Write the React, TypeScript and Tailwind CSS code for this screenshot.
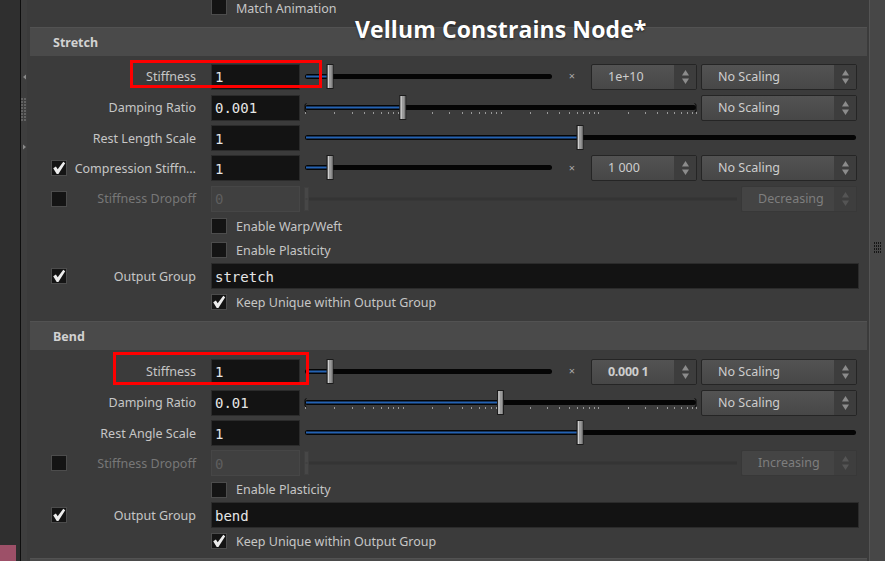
import React from "react";

const MONO = "font-['DejaVu_Sans_Mono',monospace]";

function Check({ checked, dim }: { checked?: boolean; dim?: boolean }) {
  return (
    <div className={`w-[16px] h-[16px] border ${dim ? "border-[#464646] bg-[#1a1a1a]" : "border-[#4c4c4c] bg-[#141414]"} flex items-center justify-center`}>
      {checked && (
        <svg width="14" height="14" viewBox="0 0 14 14">
          <path d="M1.2 7.2 L3.9 5.4 L5.7 8.3 L11.3 0.8 L13.2 2.3 L6.4 13 L4.7 13 Z" fill="#ececec" />
        </svg>
      )}
    </div>
  );
}

function Field({ value, w = "w-[89px]", disabled }: { value: string; w?: string; disabled?: boolean }) {
  return (
    <div
      className={`${w} h-[26px] shrink-0 border flex items-center pl-[3px] pt-[2px] ${MONO} text-[14px] ${
        disabled ? "bg-[#404040] border-[#464646] text-[#5e5e5e]" : "bg-[#131313] border-[#2b2b2b] text-[#e6e6e6]"
      }`}
    >
      {value}
    </div>
  );
}

function Arrows({ dim }: { dim?: boolean }) {
  const c = dim ? "#555555" : "#8c8c8c";
  return (
    <div className={`w-[22px] h-full flex items-center justify-center ${dim ? "bg-[#3e3e3e]" : "bg-[#3d3d3d]"}`}>
      <svg width="9" height="18" viewBox="0 0 9 18">
        <path d="M4.5 2 L8 7.5 L1 7.5 Z" fill={c} />
        <path d="M4.5 16 L8 10.5 L1 10.5 Z" fill={c} />
      </svg>
    </div>
  );
}

function Menu({ text, w, bold, dim }: { text: string; w: string; bold?: boolean; dim?: boolean }) {
  return (
    <div
      className={`${w} h-[26px] shrink-0 rounded-[2px] border flex overflow-hidden ${
        dim
          ? "border-[#383838] bg-[#444444] text-[#7e7e7e]"
          : "border-[#252525] bg-gradient-to-b from-[#535353] to-[#474747] text-[#cdcdcd]"
      }`}
    >
      <div className={`flex-1 flex items-center pl-[16px] pt-[1px] text-[12.5px] ${bold ? "font-bold tracking-[-0.3px]" : ""}`}>{text}</div>
      <Arrows dim={dim} />
    </div>
  );
}

function logTicks(w: number) {
  const span = (w - 2) / 4;
  const xs: number[] = [];
  for (let d = 0; d < 4; d++) {
    for (let k = 1; k < 10; k++) xs.push(1 + d * span + span * Math.log10(k));
  }
  xs.push(w - 1);
  return xs;
}

function Slider({ w, pos, ticks, disabled }: { w: number; pos?: number; ticks?: boolean; disabled?: boolean }) {
  if (disabled) {
    return (
      <svg width={w} height={26} className="shrink-0">
        <rect x={0} y={11.5} width={w} height={3} fill="#343434" />
        <rect x={0.5} y={1.5} width={4} height={23} fill="#474747" stroke="#3f3f3f" />
        <rect x={1.5} y={12.5} width={2} height={1} fill="#3a3a3a" />
      </svg>
    );
  }
  const p = ticks ? 1 + ((w - 2) / 4) * (pos ?? 0) : pos ?? 0;
  return (
    <svg width={w} height={26} className="shrink-0">
      <rect x={1} y={10} width={w - 2} height={5} rx={2.5} fill="#050505" />
      <rect x={2} y={11.5} width={p - 2} height={2} fill="#2562b2" />
      {ticks && (
        <>
          <path d="M2.5 8.5 L1 9.5 L1 16 L2.5 17" stroke="#0a0a0a" fill="none" />
          <path d={`M${w - 2.5} 8.5 L${w - 1} 9.5 L${w - 1} 16 L${w - 2.5} 17`} stroke="#0a0a0a" fill="none" />
          {logTicks(w).map((x, i) => (
            <rect key={i} x={Math.round(x)} y={17} width={1} height={2} fill="#9a9a9a" />
          ))}
        </>
      )}
      <rect x={p - 3} y={0.5} width={6} height={24} fill="#9a9a9a" stroke="#1b1b1b" />
      <rect x={p - 2} y={1} width={1} height={23} fill="#cfcfcf" />
      <rect x={p + 1.5} y={1} width={1} height={23} fill="#7a7a7a" />
    </svg>
  );
}

function Times() {
  return <div className="w-[38px] shrink-0 text-center text-[11px] text-[#a8a8a8]">×</div>;
}

function Row({
  h,
  label,
  check,
  disabled,
  children,
}: {
  h: string;
  label?: string;
  check?: boolean;
  disabled?: boolean;
  children: React.ReactNode;
}) {
  return (
    <div className={`${h} flex items-center shrink-0`}>
      <div className="w-[181px] shrink-0 flex items-center">
        <div className="ml-[21px] w-[16px] h-[16px]">{check !== undefined && <Check checked={check} />}</div>
        <div className={`flex-1 pr-[15px] pt-[2px] text-right whitespace-nowrap ${disabled ? "text-[#777777]" : "text-[#c6c6c6]"}`}>
          {label}
        </div>
      </div>
      {children}
    </div>
  );
}

function Toggle({ h, label, checked }: { h: string; label: string; checked?: boolean }) {
  return (
    <div className={`${h} flex items-center shrink-0 pl-[181px]`}>
      <Check checked={checked} />
      <span className="ml-[9px] pt-[2px] text-[#c6c6c6]">{label}</span>
    </div>
  );
}

function Header({ title }: { title: string }) {
  return (
    <div className="h-[29px] shrink-0 bg-[#4a4a4a] border-t border-[#525252] flex items-center pl-[23px] pt-[2px] font-bold text-[#d2d2d2]">
      {title}
    </div>
  );
}

function Grip({ cols, rows }: { cols: number; rows: number }) {
  const dots = [];
  for (let r = 0; r < rows; r++) for (let c = 0; c < cols; c++) dots.push(<rect key={`${r}-${c}`} x={c * 2} y={r * 3} width={1} height={2} fill="#151515" />);
  return (
    <svg width={cols * 2} height={rows * 3}>
      {dots}
    </svg>
  );
}

export default function App() {
  return (
    <div className="w-[885px] h-[561px] flex overflow-hidden relative bg-[#3b3b3b] font-['Noto_Sans',sans-serif] text-[12.5px]">
      <div className="w-[20px] h-full bg-[#2f2f2f] flex flex-col justify-end">
        <div className="w-[16px] h-[16px] bg-[#9d5068]" />
      </div>
      <div className="w-px h-full bg-[#0e0e0e]" />
      <div className="w-[6px] h-full bg-[#3e3e3e] flex flex-col items-center pt-[74px]">
        <svg width="5" height="6"><path d="M1 3 L4 0.5 L4 5.5 Z" fill="#8a8a8a" /></svg>
        <div className="mt-[18px] opacity-60">
          <svg width="6" height="24">
            {Array.from({ length: 8 }).map((_, r) =>
              [0, 3].map((c) => <rect key={`${r}${c}`} x={c} y={r * 3} width={2} height={2} fill="#7a7a7a" />)
            )}
          </svg>
        </div>
        <svg width="5" height="6" className="mt-[22px]"><path d="M4 3 L1 0.5 L1 5.5 Z" fill="#8a8a8a" /></svg>
      </div>

      <div className="flex-1 pl-[3px] pr-[2px] flex flex-col">
        <div className="h-[27px] shrink-0 flex items-start pl-[181px]">
          <div className="-mt-px">
            <Check />
          </div>
          <span className="ml-[9px] pt-[1px] leading-[16px] text-[#c6c6c6]">Match Animation</span>
        </div>

        <Header title="Stretch" />
        <div className="h-[5px] shrink-0" />
        <Row h="h-[31px]" label="Stiffness">
          <Field value="1" />
          <div className="w-[4px] shrink-0" />
          <Slider w={249} pos={26} />
          <Times />
          <Menu text="1e+10" w="w-[106px]" />
          <div className="w-[4px] shrink-0" />
          <Menu text="No Scaling" w="w-[156px]" />
        </Row>
        <Row h="h-[31px]" label="Damping Ratio">
          <Field value="0.001" />
          <div className="w-[4px] shrink-0" />
          <Slider w={393} pos={1} ticks />
          <div className="w-[4px] shrink-0" />
          <Menu text="No Scaling" w="w-[156px]" />
        </Row>
        <Row h="h-[30px]" label="Rest Length Scale">
          <Field value="1" />
          <div className="w-[4px] shrink-0" />
          <Slider w={553} pos={276} />
        </Row>
        <Row h="h-[30px]" label="Compression Stiffn…" check>
          <Field value="1" />
          <div className="w-[4px] shrink-0" />
          <Slider w={249} pos={26} />
          <Times />
          <Menu text="1 000" w="w-[106px]" />
          <div className="w-[4px] shrink-0" />
          <Menu text="No Scaling" w="w-[156px]" />
        </Row>
        <Row h="h-[31px]" label="Stiffness Dropoff" check={false} disabled>
          <Field value="0" disabled />
          <div className="w-[4px] shrink-0" />
          <Slider w={433} disabled />
          <div className="w-[4px] shrink-0" />
          <Menu text="Decreasing" w="w-[116px]" dim />
        </Row>
        <Toggle h="h-[24px]" label="Enable Warp/Weft" />
        <Toggle h="h-[24px]" label="Enable Plasticity" />
        <Row h="h-[28px]" label="Output Group" check>
          <Field value="stretch" w="w-[648px]" />
        </Row>
        <Toggle h="h-[24px]" label="Keep Unique within Output Group" checked />
        <div className="h-[7px] shrink-0" />

        <Header title="Bend" />
        <div className="h-[6px] shrink-0" />
        <Row h="h-[31px]" label="Stiffness">
          <Field value="1" />
          <div className="w-[4px] shrink-0" />
          <Slider w={249} pos={26} />
          <Times />
          <Menu text="0.000 1" w="w-[106px]" bold />
          <div className="w-[4px] shrink-0" />
          <Menu text="No Scaling" w="w-[156px]" />
        </Row>
        <Row h="h-[31px]" label="Damping Ratio">
          <Field value="0.01" />
          <div className="w-[4px] shrink-0" />
          <Slider w={393} pos={2} ticks />
          <div className="w-[4px] shrink-0" />
          <Menu text="No Scaling" w="w-[156px]" />
        </Row>
        <Row h="h-[30px]" label="Rest Angle Scale">
          <Field value="1" />
          <div className="w-[4px] shrink-0" />
          <Slider w={553} pos={276} />
        </Row>
        <Row h="h-[30px]" label="Stiffness Dropoff" check={false} disabled>
          <Field value="0" disabled />
          <div className="w-[4px] shrink-0" />
          <Slider w={433} disabled />
          <div className="w-[4px] shrink-0" />
          <Menu text="Increasing" w="w-[116px]" dim />
        </Row>
        <Toggle h="h-[23px]" label="Enable Plasticity" />
        <Row h="h-[28px]" label="Output Group" check>
          <Field value="bend" w="w-[648px]" />
        </Row>
        <Toggle h="h-[24px]" label="Keep Unique within Output Group" checked />
        <div className="h-[5px] shrink-0" />
        <div className="h-[10px] shrink-0 bg-[#4a4a4a] border-t border-[#525252]" />
      </div>

      <div className="w-[16px] h-full bg-[#474747] border-l border-[#545454] flex justify-center pt-[242px]">
        <Grip cols={4} rows={4} />
      </div>

      <div className="absolute left-[355px] top-[14px] text-[23px] font-bold text-white leading-[30px] [text-shadow:0_1px_2px_rgba(0,0,0,0.55)] font-['Open_Sans',sans-serif] tracking-[0.1px]">
        Vellum Constrains Node*
      </div>
      <div className="absolute left-[130px] top-[60px] w-[192px] h-[28px] border-[3px] border-[#ff0000]" />
      <div className="absolute left-[113px] top-[352px] w-[196px] h-[33px] border-[3px] border-[#ff0000]" />
    </div>
  );
}
